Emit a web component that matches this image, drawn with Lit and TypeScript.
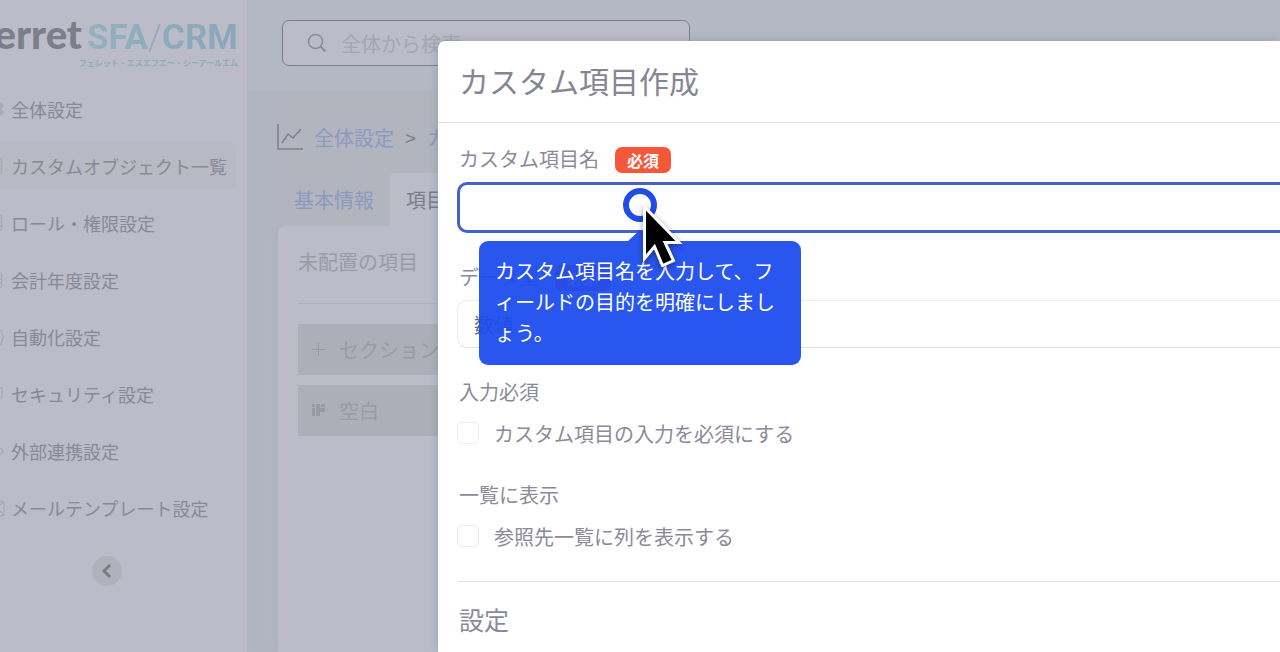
import { LitElement, html, css, svg } from "lit";
import { customElement } from "lit/decorators.js";

const layers = svg`<ellipse cx="12" cy="5" rx="8" ry="3"/><path d="M4 5v14c0 1.7 3.6 3 8 3s8-1.3 8-3V5M4 9.500c0 1.700 3.600 3 8 3s8-1.300 8-3M4 14c0 1.700 3.600 3 8 3s8-1.300 8-3"/>`;

const NAV = [
  {
    label: "全体設定",
    solid: true,
    icon: svg`<path d="M10 2h4l.6 3 2.200 1.200L19.600 5l2 3.500L19.500 10.600v2.800l2.100 2.100-2 3.500-2.800-1L14.600 19 14 22h-4l-.6-3-2.200-1-2.800 1-2-3.500 2.100-2.100v-2.800L2.400 8.500l2-3.500 2.800 1.200L9.400 5z"/>`,
  },
  { label: "カスタムオブジェクト一覧", active: true, icon: layers },
  { label: "ロール・権限設定", icon: layers },
  { label: "会計年度設定", icon: layers },
  {
    label: "自動化設定",
    icon: svg`<path d="M6 3C3 3 5 11 2 12c3 1 1 9 4 9M18 3c4 0 1 8 5 9-4 1-1 9-5 9"/>`,
  },
  {
    label: "セキュリティ設定",
    icon: svg`<path d="M12 2c3 2 5 3 8.500 3v7c0 5-4 8-8.500 10-4.500-2-8.500-5-8.500-10V5C7 5 9 4 12 2z"/>`,
  },
  {
    label: "外部連携設定",
    icon: svg`<circle cx="18" cy="12" r="3"/><circle cx="4" cy="12" r="3"/><path d="M7 12h8"/>`,
  },
  {
    label: "メールテンプレート設定",
    icon: svg`<rect x="1" y="4" width="22" height="17" rx="2"/><path d="m2 5 10 9L22 5M22 20l-7-8M2 20l7-8"/>`,
  },
];

@customElement("side-nav")
class SideNav extends LitElement {
  static styles = css`
    :host {
      display: flex;
      flex-direction: column;
      overflow: hidden;
      background: #bbbcc7;
      color: #868a97;
      font-size: 18px;
    }
    .logo {
      display: flex;
      flex-direction: column;
      align-items: flex-end;
      height: 85px;
      padding: 13px 9px 0 0;
      box-sizing: border-box;
      white-space: nowrap;
    }
    .marks {
      display: flex;
      align-items: baseline;
      gap: 5px;
      line-height: 42px;
    }
    .ferret {
      font: 900 40px/42px Lato, sans-serif;
      color: #7c7f89;
    }
    .sfa {
      font: 700 35px/42px Roboto, sans-serif;
      background: linear-gradient(90deg, #92b0be, #89a6bc);
      background-clip: text;
      color: transparent;
    }
    .slash {
      font-weight: 300;
    }
    .ruby {
      font-size: 8px;
      font-weight: 700;
      line-height: 8px;
      color: #8facbf;
    }
    nav {
      display: flex;
      flex-direction: column;
      gap: 10px;
      margin-left: -15px;
      padding-right: 11px;
    }
    a {
      display: flex;
      align-items: center;
      gap: 6px;
      height: 47px;
      color: inherit;
      text-decoration: none;
      white-space: nowrap;
      border-radius: 6px;
    }
    .active {
      background: #b8b9c3;
    }
    .icon {
      width: 20px;
      height: 20px;
      flex: none;
      fill: none;
      stroke: #a8aab5;
      stroke-width: 1.5;
    }
    .solid {
      fill: #a8aab5;
    }
    .fold {
      display: grid;
      place-items: center;
      align-self: center;
      width: 30px;
      height: 30px;
      margin: 25px 34px 0 0;
      padding: 0;
      border: 0;
      border-radius: 50%;
      background: #b0b1bb;
    }
    .chevron {
      width: 14px;
      height: 16px;
      fill: none;
      stroke: #797b86;
      stroke-width: 3;
    }
  `;
  render() {
    return html`
      <div class="logo">
        <div class="marks">
          <span class="ferret">erret</span>
          <span class="sfa">SFA<span class="slash">/</span>CRM</span>
        </div>
        <span class="ruby">フェレット・エスエフエー・シーアールエム</span>
      </div>
      <nav>
        ${NAV.map(
          (n) => html`<a href="#" class=${n.active ? "active" : ""}>
            <svg class="icon ${n.solid ? "solid" : ""}" viewBox="0 0 24 24">${n.icon}</svg>${n.label}
          </a>`
        )}
      </nav>
      <button class="fold" aria-label="メニューを閉じる">
        <svg class="chevron" viewBox="0 0 14 16"><path d="M10 2 4 8l6 6" /></svg>
      </button>
    `;
  }
}

@customElement("settings-page")
class SettingsPage extends LitElement {
  static styles = css`
    :host {
      display: flex;
      flex-direction: column;
      min-width: 0;
      background: linear-gradient(90deg, #b2b6c0, #b2b4be 60px);
      font-size: 20px;
    }
    header {
      padding: 20px 35px 24px;
      background: #b4b8c2;
    }
    .search {
      display: flex;
      align-items: center;
      gap: 14px;
      width: 408px;
      height: 46px;
      box-sizing: border-box;
      padding: 0 24px;
      border: 1px solid #7c7e88;
      border-radius: 7px;
      background: #bbbcc7;
    }
    .search svg {
      width: 20px;
      height: 20px;
      flex: none;
      fill: none;
      stroke: #898b95;
      stroke-width: 1.5;
    }
    .search input {
      flex: 1;
      min-width: 0;
      padding: 0;
      border: 0;
      outline: 0;
      background: none;
      font: inherit;
    }
    .search input::placeholder {
      color: #a2a7b3;
      opacity: 1;
    }
    .crumbs {
      display: flex;
      align-items: center;
      gap: 11px;
      padding: 32px 30px 0;
      height: 30px;
      color: #7e808a;
      white-space: nowrap;
    }
    .crumbs svg {
      width: 26px;
      height: 26px;
      fill: none;
      stroke: #7e808a;
      stroke-width: 1.5;
    }
    a {
      color: #8b9ac1;
      text-decoration: none;
    }
    .tabs {
      display: flex;
      margin: 21px 31px 0;
      line-height: 53px;
    }
    .tab {
      padding: 0 16px;
      border-radius: 5px 5px 0 0;
    }
    .current {
      background: #bbbcc7;
      color: #7a7c86;
    }
    .card {
      flex: 1;
      margin: 0 31px;
      padding: 16px 20px;
      background: #bbbcc7;
      border-radius: 6px 0 0 0;
      box-shadow: 0 0 12px #abadb8;
      clip-path: inset(0 0 0 -16px);
      color: #999ba6;
    }
    h2 {
      margin: 0 0 20px;
      padding-bottom: 21px;
      border-bottom: 1px solid #acb2bc;
      font-size: 20px;
      font-weight: 400;
      line-height: 40px;
    }
    .block {
      display: flex;
      align-items: center;
      gap: 13px;
      height: 51px;
      margin-bottom: 10px;
      padding-left: 13px;
      background: #acafb8;
    }
    .block svg {
      width: 15px;
      height: 15px;
      fill: #9799a4;
    }
  `;
  render() {
    return html`
      <header>
        <label class="search">
          <svg viewBox="0 0 20 20"><circle cx="8.500" cy="8.500" r="7" /><path d="m13.500 13.500 5 5" stroke-width="2" /></svg>
          <input type="search" placeholder="全体から検索" aria-label="全体から検索" />
        </label>
      </header>
      <div class="crumbs">
        <svg viewBox="0 0 26 26"><path d="M1 0v25h25M5 19l6-9 5 4 8-9" /></svg>
        <a href="#">全体設定</a><span>&gt;</span><a href="#">カスタムオブジェクト一覧</a>
      </div>
      <div class="tabs">
        <a class="tab" href="#">基本情報</a>
        <a class="tab current" href="#">項目設定</a>
      </div>
      <section class="card">
        <h2>未配置の項目</h2>
        <div class="block">
          <svg viewBox="0 0 15 15"><path d="M7 1h1v6h6v1H8v6H7V8H1V7h6z" /></svg>セクション
        </div>
        <div class="block">
          <svg viewBox="0 0 15 15"><path d="M1 1h3v3H1zM1 5h3v8H1zM5 1h4v12H5zM10 1h4v3h-4zM9 5h5v4H9z" /></svg>空白
        </div>
      </section>
    `;
  }
}

@customElement("field-dialog")
class FieldDialog extends LitElement {
  static styles = css`
    :host {
      display: block;
      overflow: hidden;
      background: #fff;
      color: #8a8a99;
      border-radius: 7px 0 0 0;
      box-shadow: 0 0 10px #70758566;
      font-size: 20px;
    }
    h1 {
      margin: 0;
      padding: 0 21px 3px;
      border-bottom: 1px solid #dedee2;
      font-size: 30px;
      font-weight: 400;
      line-height: 78px;
      color: #858594;
    }
    form {
      display: flex;
      flex-direction: column;
      gap: 30px;
      padding: 22px 0 0 19px;
    }
    .field {
      display: flex;
      flex-direction: column;
      gap: 9px;
    }
    .caption {
      display: flex;
      align-items: flex-end;
      gap: 16px;
      padding-left: 2px;
      line-height: 28px;
    }
    .badge {
      padding: 0 12px;
      border-radius: 7px;
      background: #f4583a;
      color: #fff;
      font-size: 16px;
      font-weight: 700;
      line-height: 26px;
    }
    .text,
    .select {
      width: 100%;
      box-sizing: border-box;
      border-radius: 10px 0 0 10px;
      background: #fff;
      font: inherit;
      outline: 0;
    }
    .text {
      height: 51px;
      border: 3px solid #4462c8;
      border-right: 0;
    }
    .select {
      appearance: none;
      height: 48px;
      padding: 0 16px;
      border: 1px solid #ececf0;
      border-bottom-color: #e0e0e5;
      border-right: 0;
      color: #686876;
    }
    .check {
      display: flex;
      align-items: center;
      gap: 15px;
      height: 36px;
    }
    .check input {
      appearance: none;
      width: 22px;
      height: 22px;
      margin: 0;
      border: 1px solid #ececf0;
      border-radius: 5px;
      background: #fff;
    }
    .more {
      margin: 27px 0 0 20px;
      padding: 17px 0 0 1px;
      border-top: 1px solid #dedee2;
      font-size: 25px;
      font-weight: 400;
      line-height: 40px;
    }
  `;
  render() {
    return html`
      <h1>カスタム項目作成</h1>
      <form>
        <div class="field">
          <label class="caption" for="name">カスタム項目名<span class="badge">必須</span></label>
          <input class="text" id="name" type="text" />
        </div>
        <div class="field">
          <label class="caption" for="type">データ型<span class="badge">必須</span></label>
          <select class="select" id="type"><option>数値</option></select>
        </div>
        <div class="field">
          <span class="caption">入力必須</span>
          <label class="check"><input type="checkbox" />カスタム項目の入力を必須にする</label>
        </div>
        <div class="field">
          <span class="caption">一覧に表示</span>
          <label class="check"><input type="checkbox" />参照先一覧に列を表示する</label>
        </div>
      </form>
      <h2 class="more">設定</h2>
    `;
  }
}

@customElement("app-root")
class AppRoot extends LitElement {
  static styles = css`
    :host {
      display: grid;
      grid-template-columns: 247px 1fr;
      position: relative;
      height: 100vh;
      overflow: hidden;
      font-family: "Noto Sans CJK JP", sans-serif;
    }
    .dialog {
      position: absolute;
      inset: 41px 0 0 438px;
    }
    .tip {
      position: absolute;
      left: 479px;
      top: 241px;
      width: 322px;
      box-sizing: border-box;
      padding: 14px 16px 17px;
      border-radius: 9px;
      background: #1e4dedf2;
      color: #fff;
      font-size: 20px;
      line-height: 31px;
    }
    .tip::before {
      content: "";
      position: absolute;
      left: 149px;
      top: -11px;
      width: 24px;
      height: 11px;
      background: #1e4dedf2;
      clip-path: polygon(50% 0, 100% 100%, 0 100%);
    }
    .pointer {
      position: absolute;
      left: 618px;
      top: 183px;
      width: 72px;
      height: 92px;
    }
    .arrow {
      filter: drop-shadow(0 2px 3px #0006);
    }
  `;
  render() {
    return html`
      <side-nav></side-nav>
      <settings-page></settings-page>
      <field-dialog class="dialog" role="dialog" aria-label="カスタム項目作成"></field-dialog>
      <div class="tip" role="tooltip">カスタム項目名を入力して、フィールドの目的を明確にしましょう。</div>
      <svg class="pointer" viewBox="0 0 72 92" aria-hidden="true">
        <circle cx="22" cy="22" r="14" fill="#fff" stroke="#204de9" stroke-width="6" />
        <path class="arrow" d="M26.500 24v51.500l10-12 8 19 11-5-8.500-18h14z" fill="#000" stroke="#fff" stroke-width="3" />
      </svg>
    `;
  }
}
